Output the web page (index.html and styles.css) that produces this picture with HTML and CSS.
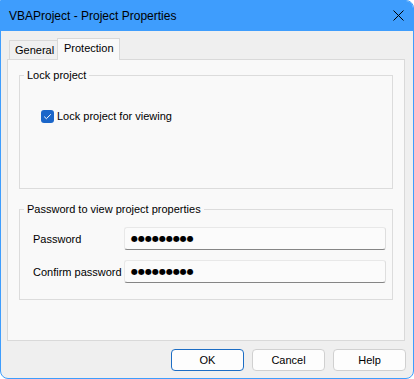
FILE: index.html
```html
<!DOCTYPE html>
<html>
<head>
<meta charset="utf-8">
<link rel="stylesheet" href="styles.css">
</head>
<body>
<div class="window">
  <div class="titlebar">
    <span class="title">VBAProject - Project Properties</span>
    <svg class="close" width="11" height="11" viewBox="0 0 11 11"><path d="M0.5 0.5 L10.5 10.5 M10.5 0.5 L0.5 10.5" stroke="#000" stroke-width="1" fill="none"/></svg>
  </div>
  <div class="client">
    <div class="tabs">
      <div class="tab">General</div>
      <div class="tab active">Protection</div>
    </div>
    <div class="panel">
      <div class="group group-lock">
        <span class="legend">Lock project</span>
        <label class="check">
          <span class="box"><svg width="13" height="13" viewBox="0 0 13 13"><path d="M3.2 6.6 L5.4 8.7 L9.8 4.3" stroke="#fff" stroke-width="1" fill="none"/></svg></span>
          <span>Lock project for viewing</span>
        </label>
      </div>
      <div class="group group-pass">
        <span class="legend">Password to view project properties</span>
        <div class="row">
          <span class="lbl">Password</span>
          <div class="input"><span class="dots">●●●●●●●●●</span></div>
        </div>
        <div class="row">
          <span class="lbl">Confirm password</span>
          <div class="input"><span class="dots">●●●●●●●●●</span></div>
        </div>
      </div>
    </div>
    <div class="buttons">
      <div class="btn default">OK</div>
      <div class="btn">Cancel</div>
      <div class="btn">Help</div>
    </div>
  </div>
</div>
</body>
</html>
```

FILE: styles.css
```css
* { box-sizing: border-box; }
html, body { margin: 0; padding: 0; background: #ffffff; }
body {
  font-family: "Liberation Sans", Arial, sans-serif;
  font-size: 11px;
  color: #000;
}
.window {
  width: 414px;
  height: 379px;
  border: 1px solid #3e9dfd;
  border-radius: 0 8px 8px 8px;
  background: #efefef;
  overflow: hidden;
  display: flex;
  flex-direction: column;
}
.titlebar {
  height: 30px;
  flex: none;
  background: #3e9dfd;
  display: flex;
  align-items: center;
  padding-left: 8px;
  padding-right: 9px;
}
.title {
  font-size: 12px;
  line-height: 30px;
  flex: 1;
}
.close { display: block; margin-top: -1px; }
.client {
  flex: 1;
  padding: 7px 8px 0 6px;
  display: flex;
  flex-direction: column;
}
.tabs {
  display: flex;
  align-items: flex-end;
  height: 21px;
  padding-left: 2px;
  position: relative;
  z-index: 1;
}
.tab {
  border: 1px solid #d9d9d9;
  border-bottom: none;
  line-height: 14px;
  padding: 2px 0 0 6px;
}
.tab:first-child {
  width: 49px;
  height: 19px;
  background: #f0f0f0;
  padding-left: 5px;
  padding-top: 2px;
}
.tab.active {
  width: 63px;
  height: 22px;
  margin-bottom: -1px;
  margin-left: -1px;
  background: #f9f9f9;
  padding-left: 6px;
  padding-top: 2px;
}
.panel {
  height: 282px;
  flex: none;
  border: 1px solid #d9d9d9;
  background: #f9f9f9;
  padding: 15px 11px 0 11px;
}
.group {
  border: 1px solid #dcdcdc;
}
.legend {
  display: block;
  width: fit-content;
  line-height: 14px;
  height: 14px;
  margin-top: -8px;
  margin-left: 4px;
  padding: 0 3px;
  background: #f9f9f9;
}
.group-lock { height: 114px; }
.check {
  display: flex;
  align-items: center;
  gap: 3px;
  margin: 28px 0 0 21px;
  height: 13px;
  line-height: 13px;
}
.box {
  width: 13px;
  height: 13px;
  border-radius: 3px;
  background: #1b66c9;
  display: block;
}
.box svg { display: block; }
.group-pass {
  height: 91px;
  margin-top: 20px;
  padding: 0 6px 0 13px;
}
.group-pass .legend { margin-left: -9px; }
.row {
  display: flex;
  align-items: center;
  height: 23px;
  margin-top: 10px;
}
.legend + .row { margin-top: 11px; }
.lbl { width: 91px; flex: none; }
.input {
  flex: 1;
  height: 23px;
  border: 1px solid #e8e8e8;
  border-bottom: 1px solid #858585;
  border-right-color: #dedede;
  border-radius: 3px;
  background: #fbfbfb;
  display: flex;
  align-items: center;
  padding-left: 6px;
}
.dots {
  font-family: "DejaVu Sans", sans-serif;
  font-size: 8px;
  letter-spacing: 0px;
  line-height: 10px;
}
.buttons {
  display: flex;
  justify-content: flex-end;
  gap: 8px;
  margin-top: 8px;
  margin-right: -1px;
}
.btn {
  width: 73px;
  height: 22px;
  border: 1px solid #d0d0d0;
  border-radius: 4px;
  background: #fdfdfd;
  text-align: center;
  line-height: 20px;
}
.btn.default { border-color: #1c6dc4; }
```
